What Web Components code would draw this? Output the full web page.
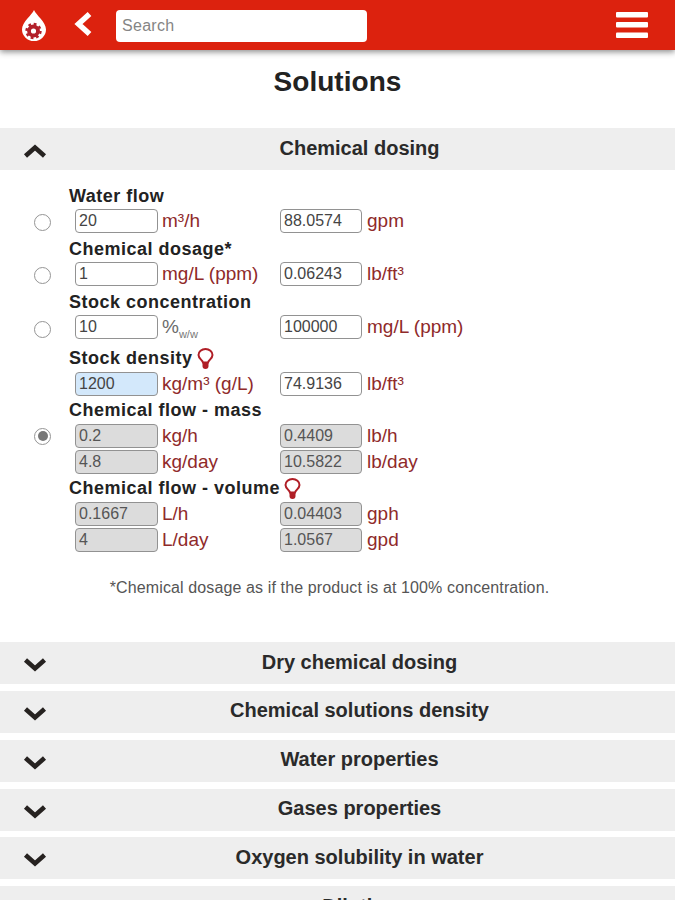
<!DOCTYPE html>
<html lang="en"><head><meta charset="utf-8"><title>Solutions</title>
<style>
html,body{margin:0;padding:0;background:#fff;overflow:hidden;height:900px}
body{font-family:"Liberation Sans",Arial,sans-serif;color:#222}
</style></head><body>
<app-bar></app-bar>
<h-title>Solutions</h-title>
<acc-item open label="Chemical dosing">
  <calc-panel></calc-panel>
</acc-item>
<acc-item label="Dry chemical dosing"></acc-item>
<acc-item label="Chemical solutions density"></acc-item>
<acc-item label="Water properties"></acc-item>
<acc-item label="Gases properties"></acc-item>
<acc-item label="Oxygen solubility in water"></acc-item>
<acc-item label="Dilution"></acc-item>
<script>
class AppBar extends HTMLElement{constructor(){super();this.attachShadow({mode:'open'}).innerHTML=`
<style>
:host{display:flex;align-items:center;height:50px;background:#dc220e;box-shadow:0 2px 6px rgba(0,0,0,.45);position:relative;z-index:2}
.logo{width:28px;height:32px;margin-left:20px;flex:none}
.back{width:20px;height:26px;margin-left:25px;margin-top:-2px;flex:none}
.s{flex:none;box-sizing:border-box;width:251px;height:32px;margin-left:23px;margin-top:2px;background:#fff;border-radius:4px;padding-left:6px;display:flex;align-items:center;font-size:16px;letter-spacing:.3px;color:#858585}
.menu{width:32px;height:26px;margin-left:auto;margin-right:27px;flex:none}
</style>
<svg class="logo" viewBox="0 0 28 32"><path fill="#fff" d="M14 1C16 6 26 13 26 20.500A12 11.500 0 0 1 2 20.500C2 13 12 6 14 1Z"/><circle cx="13.500" cy="22" r="4.500" fill="none" stroke="#b2202a" stroke-width="3.800"/><circle cx="13.500" cy="22" r="7" fill="none" stroke="#b2202a" stroke-width="2.400" stroke-dasharray="2.750 2.750"/></svg>
<svg class="back" viewBox="0 0 20 26"><path fill="none" stroke="#fff" stroke-width="5.500" d="M16.500 3L5.500 13l11 10"/></svg>
<div class="s">Search</div>
<svg class="menu" viewBox="0 0 32 26"><g fill="#fff"><rect y="0" width="32" height="5.500" rx="1"/><rect y="10" width="32" height="5.500" rx="1"/><rect y="20.500" width="32" height="5.500" rx="1"/></g></svg>`}}
customElements.define('app-bar',AppBar);

class HTitle extends HTMLElement{constructor(){super();this.attachShadow({mode:'open'}).innerHTML=`
<style>:host{display:block;text-align:center;font-weight:700;font-size:28px;letter-spacing:.05px;line-height:32px;padding:16px 0 30px;color:#222}</style><slot></slot>`}}
customElements.define('h-title',HTitle);

class AccItem extends HTMLElement{constructor(){super();const o=this.hasAttribute('open');this.attachShadow({mode:'open'}).innerHTML=`
<style>
:host{display:block;margin-bottom:${o?'7px':'6.850px'}}
.h{height:42px;background:#eeeeee;display:grid;grid-template-columns:70px 1fr;align-items:center;font-weight:700;font-size:20px;color:#2a2a2a}
.t{text-align:center;padding-right:26px;margin-top:-2px}
svg{width:24px;height:14px;margin-left:23px;margin-top:${o?3:4}px;display:block}
</style>
<div class="h"><svg viewBox="0 0 24 14"><path fill="none" stroke="#262220" stroke-width="4.600" d="${o?'M2.500 12L12 3.500 21.500 12':'M2.500 2L12 10.500 21.500 2'}"/></svg><div class="t">${this.getAttribute('label')}</div></div><slot></slot>`}}
customElements.define('acc-item',AccItem);

class NumBox extends HTMLElement{constructor(){super();const k=this.getAttribute('kind')||'';this.attachShadow({mode:'open'}).innerHTML=`
<style>
:host{display:block;flex:none;box-sizing:border-box;width:83px;height:24px;border:1.500px solid #929292;border-radius:4px;padding-left:3px;font-size:16px;line-height:21px;color:#444;background:${k==='ro'?'#dcdcdc':k==='hi'?'#d3e8fb':'#fff'};${k==='ro'?'color:#555;':''}white-space:nowrap;overflow:hidden}
</style><slot></slot>`}}
customElements.define('num-box',NumBox);

class CalcRow extends HTMLElement{constructor(){super();const a=this.getAttribute.bind(this);const kind=a('kind')||'';const sub=s=>s.replace(/_(.+)$/,'<sub>$1</sub>');this.attachShadow({mode:'open'}).innerHTML=`
<style>
:host{display:grid;grid-template-columns:205px 1fr;height:26px;align-items:center;font-size:19px;color:#8f2a2a}
.c{display:flex;align-items:center;gap:4px;white-space:nowrap}
.c+.c{gap:5px}
.c+.c num-box{width:82px}
sub{font-size:11px;color:#777;vertical-align:-5px;line-height:0}
.g{color:#6a6a6a}
</style>
<div class="c"><num-box kind="${kind}">${a('v1')}</num-box><span class="${a('u1')&&a('u1').includes('_')?'g':''}">${sub(a('u1'))}</span></div>
<div class="c"><num-box kind="${kind==='hi'?'':kind}">${a('v2')}</num-box><span>${a('u2')}</span></div>`}}
customElements.define('calc-row',CalcRow);

class CalcGroup extends HTMLElement{constructor(){super();const r=this.getAttribute('radio');const h=this.hasAttribute('bulb');const off=this.getAttribute('pad')||'0';const top=this.getAttribute('top')||'0';this.attachShadow({mode:'open'}).innerHTML=`
<style>
:host{display:grid;grid-template-columns:75px 1fr;position:relative}
.l{box-sizing:border-box;font-weight:700;font-size:18px;line-height:26px;color:#222;grid-column:2;margin-left:-6px;display:flex;align-items:center;gap:4px;white-space:nowrap;letter-spacing:.5px;height:${this.getAttribute('lh')||'26'}px;padding-top:${top}px}
.r{grid-column:1;grid-row:2;align-self:start;margin:${off}px 0 0 34px;box-sizing:border-box;width:17px;height:17px;border-radius:50%;border:1.500px solid #959595;background:#fff;display:flex;align-items:center;justify-content:center}
.r i{width:10px;height:10px;border-radius:50%;background:#777;display:block}
.b{grid-column:2;grid-row:2}
svg{width:19px;height:22px;margin-top:1px;margin-left:-1px;flex:none}
</style>
<div class="l"><slot name="label"></slot>${h?`<svg viewBox="0 0 18 22"><path fill="none" stroke="#b01e26" stroke-width="2" d="M6.500 14.500C6 12 2 10.500 2 7A7 6 0 0 1 16 7C16 10.500 12 12 11.500 14.500Z"/><path fill="#b01e26" d="M6 15h6v3a3 3 0 0 1-6 0Z"/></svg>`:''}</div>
${r!==null?`<div class="r">${r==='on'?'<i></i>':''}</div>`:''}
<div class="b"><slot></slot></div>`}}
customElements.define('calc-group',CalcGroup);

class CalcPanel extends HTMLElement{constructor(){super();this.attachShadow({mode:'open'}).innerHTML=`
<style>
:host{display:block;padding:11px 0 0;height:465px;box-sizing:border-box}
p{margin:25px 0 0;text-align:center;font-size:16px;letter-spacing:.12px;color:#555;padding-right:16px;line-height:20px}
</style>
<calc-group radio="off" pad="6" lh="27" top="2"><span slot="label">Water flow</span><calc-row v1="20" u1="m³/h" v2="88.0574" u2="gpm"></calc-row></calc-group>
<calc-group radio="off" pad="5.500" lh="27" top="2"><span slot="label">Chemical dosage*</span><calc-row v1="1" u1="mg/L (ppm)" v2="0.06243" u2="lb/ft³"></calc-row></calc-group>
<calc-group radio="off" pad="6.500" lh="27" top="2"><span slot="label">Stock concentration</span><calc-row v1="10" u1="%_w/w" v2="100000" u2="mg/L (ppm)"></calc-row></calc-group>
<calc-group bulb lh="31" top="5"><span slot="label">Stock density</span><calc-row kind="hi" v1="1200" u1="kg/m³ (g/L)" v2="74.9136" u2="lb/ft³"></calc-row></calc-group>
<calc-group radio="on" pad="4.500"><span slot="label">Chemical flow - mass</span><calc-row kind="ro" v1="0.2" u1="kg/h" v2="0.4409" u2="lb/h"></calc-row><calc-row kind="ro" v1="4.8" u1="kg/day" v2="10.5822" u2="lb/day"></calc-row></calc-group>
<calc-group bulb lh="26"><span slot="label">Chemical flow - volume</span><calc-row kind="ro" v1="0.1667" u1="L/h" v2="0.04403" u2="gph"></calc-row><calc-row kind="ro" v1="4" u1="L/day" v2="1.0567" u2="gpd"></calc-row></calc-group>
<p>*Chemical dosage as if the product is at 100% concentration.</p>`}}
customElements.define('calc-panel',CalcPanel);
</script>
</body></html>
